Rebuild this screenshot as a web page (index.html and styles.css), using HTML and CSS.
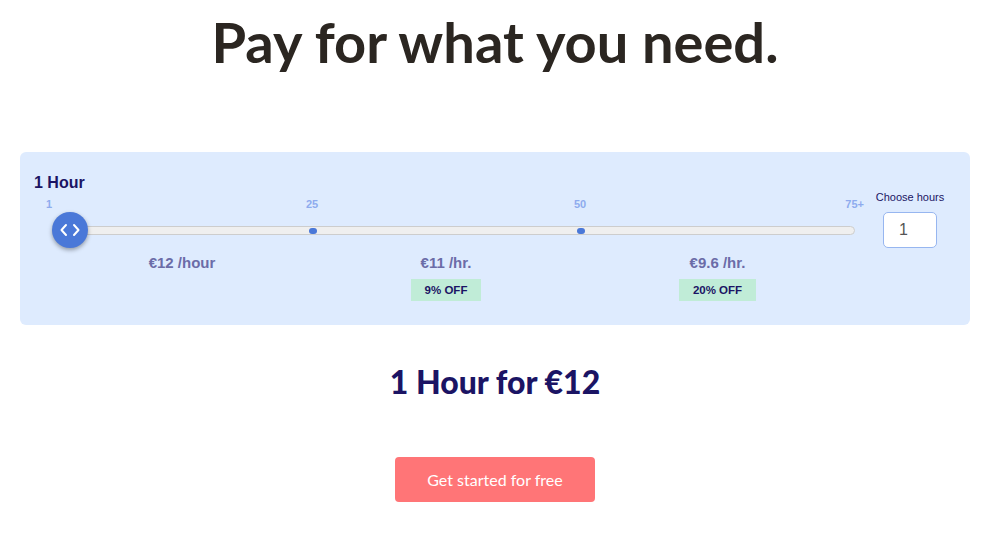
FILE: index.html
```html
<!DOCTYPE html>
<html>
<head>
	<meta charset="utf-8">
	<title>Pricing</title>
	<link rel="stylesheet" href="styles.css">
</head>
<body>
<div class="page">
	<h1 class="title">Pay for what you need.</h1>
	<div class="panel">
		<div class="slider-col">
			<div class="hours">1 Hour</div>
			<div class="scale">
				<div class="ticks">
					<span>1</span>
					<span>25</span>
					<span>50</span>
					<span class="last">75+</span>
				</div>
				<div class="track">
					<span class="dot dot1"></span>
					<span class="dot dot2"></span>
					<span class="handle">
						<svg width="20" height="14" viewBox="0 0 20 14">
							<polyline points="6,2 1.5,7 6,12" fill="none" stroke="#fff" stroke-width="2" stroke-linecap="round" stroke-linejoin="round"/>
							<polyline points="14,2 18.5,7 14,12" fill="none" stroke="#fff" stroke-width="2" stroke-linecap="round" stroke-linejoin="round"/>
						</svg>
					</span>
				</div>
				<div class="prices">
					<div class="tier">
						<div class="price">€12 /hour</div>
					</div>
					<div class="tier">
						<div class="price">€11 /hr.</div>
						<div class="off">9% OFF</div>
					</div>
					<div class="tier">
						<div class="price">€9.6 /hr.</div>
						<div class="off">20% OFF</div>
					</div>
				</div>
			</div>
		</div>
		<div class="side">
			<div class="choose">Choose hours</div>
			<div class="input">1</div>
		</div>
	</div>
	<div class="total">1 Hour for €12</div>
	<div class="cta">
		<a class="btn" href="#">Get started for free</a>
	</div>
</div>
</body>
</html>
```

FILE: styles.css
```css
*{
	margin:0;
	padding:0;
	box-sizing:border-box;
}
body{
	background:#fff;
	font-family:"Liberation Sans",Arial,sans-serif;
}
.page{
	padding:0 20px;
}
.title{
	font-family:Lato,"Open Sans",sans-serif;
	font-weight:700;
	font-size:56px;
	line-height:68px;
	color:#2b2621;
	text-align:center;
	margin-top:8px;
}
.panel{
	margin-top:76px;
	background:#deebfe;
	border-radius:6px;
	padding:22px 27px 24px 14px;
	display:flex;
	gap:22px;
}
.slider-col{
	flex:1;
}
.hours{
	font-size:16px;
	font-weight:bold;
	color:#1b1464;
	line-height:18px;
}
.scale{
	margin-left:18px;
	width:803px;
}
.ticks{
	display:grid;
	grid-template-columns:260px 268px 1fr auto;
	margin-top:5px;
	font-size:11px;
	font-weight:bold;
	color:#8eabee;
	line-height:14px;
}
.ticks span{
	margin-left:-6px;
}
.ticks .last{
	margin-left:0;
	margin-right:-9px;
}
.track{
	position:relative;
	height:9px;
	margin-top:15px;
	background:#efefef;
	border:1px solid #cdcdcd;
	border-radius:5px;
}
.dot{
	position:absolute;
	top:1px;
	width:8px;
	height:6px;
	border-radius:3px;
	background:#4a78d8;
}
.dot1{
	left:256px;
}
.dot2{
	left:524px;
}
.handle{
	position:absolute;
	left:-1px;
	top:-15px;
	width:36px;
	height:36px;
	border-radius:50%;
	background:#4a78d8;
	box-shadow:0 2px 4px rgba(0,0,0,0.35);
	display:flex;
	align-items:center;
	justify-content:center;
}
.prices{
	display:grid;
	grid-template-columns:260px 268px 1fr;
	margin-top:19px;
}
.tier{
	display:flex;
	flex-direction:column;
	align-items:center;
}
.price{
	font-size:15px;
	font-weight:bold;
	color:#6b6ca8;
	line-height:17px;
}
.off{
	margin-top:8px;
	background:#c0ecd7;
	color:#1b1464;
	font-size:11.5px;
	font-weight:bold;
	line-height:22px;
	padding:0 14px;
}
.side{
	width:66px;
	display:flex;
	flex-direction:column;
	align-items:center;
	padding-top:16px;
}
.choose{
	font-size:11px;
	color:#1b1464;
	line-height:14px;
	white-space:nowrap;
}
.input{
	margin-top:8px;
	width:54px;
	height:36px;
	background:#fff;
	border:1px solid #97b6f0;
	border-radius:5px;
	font-size:16px;
	color:#555;
	line-height:34px;
	padding-left:15px;
}
.total{
	font-family:Lato,"Open Sans",sans-serif;
	font-weight:900;
	font-size:32px;
	color:#1b1464;
	text-align:center;
	margin-top:38px;
	line-height:38px;
}
.cta{
	display:flex;
	justify-content:center;
	margin-top:56px;
}
.btn{
	display:block;
	width:200px;
	height:45px;
	background:#ff7577;
	border-radius:4px;
	color:#fff;
	text-decoration:none;
	text-align:center;
	font-family:Lato,"Open Sans",sans-serif;
	font-size:16px;
	line-height:45px;
}
```
